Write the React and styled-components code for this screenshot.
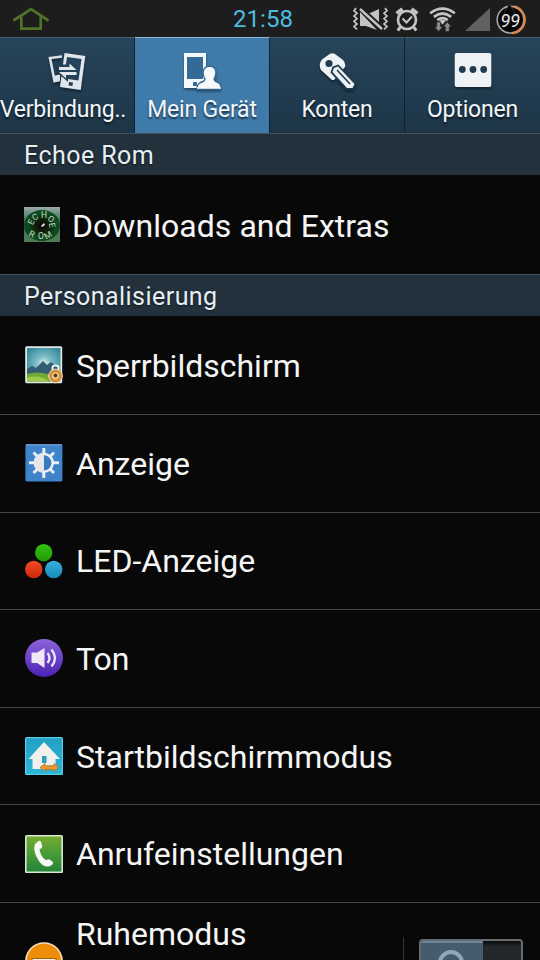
import React from 'react';
import styled, { createGlobalStyle } from 'styled-components';

const StatusHome = () => (
	<svg width='38' height='24' viewBox='0 0 38 24' fill='none' stroke='#4f7227' strokeWidth='2.7'>
		<path d='M1.5 13.5 19 2.2 36.5 13.5' />
		<path d='M9.3 10v11.6h19.4V10' />
	</svg>
);

const MutedVibrate = () => (
	<svg width='36' height='26' viewBox='0 0 36 26'>
		<path d='M14 8.5 26 3v14zM7 6v14h6l11 4z' fill='#c3c3c3' />
		<path d='m7 2 22 20' stroke='#1d1d1d' strokeWidth='5' />
		<path d='m7 3 22 20' stroke='#c3c3c3' strokeWidth='2.4' />
		<path
			d='m3 2-2 2.7 3 2.6-3 2.7 3 2.7-3 2.6 3 2.7-3 2.6 3 2.7M32 2l2 2.7-3 2.6 3 2.7-3 2.7 3 2.6-3 2.7 3 2.6-3 2.7'
			fill='none'
			stroke='#c3c3c3'
			strokeWidth='1.7'
		/>
	</svg>
);

const Alarm = () => (
	<svg width='24' height='26' viewBox='0 0 24 26' fill='none' stroke='#c3c3c3'>
		<circle cx='12' cy='14' r='9' strokeWidth='2.7' />
		<path d='m7.5 12.5 4 4 5.5-6' strokeWidth='2' />
		<path d='M1.7 7.5 7.5 3M22.3 7.5 16.5 3' strokeWidth='4' />
		<path d='m5.5 21-2.8 3.5M18.5 21l2.8 3.5' strokeWidth='3' />
	</svg>
);

const Wifi = () => (
	<svg width='27' height='26' viewBox='0 0 28 26' fill='none' stroke='#c3c3c3' strokeWidth='2.8'>
		<path d='M1.2 7q12.8-9.5 25.6 0M5 10.8q9-7 18 0M8.6 14.2q5.4-4.2 10.8 0' />
		<path d='m10.6 15 3.4 3.7 3.4-3.7q-3.4-2.4-6.8 0z' fill='#c3c3c3' stroke='none' />
		<path d='M8 16h4v5h2.3L10 26l-4.3-5H8zM17 26v-5h-2.3l4.3-5 4.3 5H21v5z' fill='#8b8b8b' stroke='#1d1d1d' strokeWidth='.6' />
	</svg>
);

const Signal = () => (
	<svg width='25' height='24' viewBox='0 0 25 24'>
		<path d='M0 24 25 1v23z' fill='#606060' />
	</svg>
);

const Battery = () => (
	<svg width='32' height='34' viewBox='0 0 32 34'>
		<circle cx='15.5' cy='17.7' r='13.3' fill='#060606' stroke='#a7a7a7' strokeWidth='1.6' />
		<path d='M19 4.5a13.5 13.5 0 0 1-2 26.7' fill='none' stroke='#d7864f' strokeWidth='2.3' />
		<path d='m14.5 2 7.5 13H7z' fill='#050505' stroke='#444' strokeWidth='.7' />
		<text x='15.3' y='24.8' textAnchor='middle' fontFamily='Roboto, sans-serif' fontSize='18' fontStyle='italic' fill='#e9e9e9'>
			99
		</text>
	</svg>
);

const ConnectionsIcon = () => (
	<svg width='38' height='38' viewBox='0 0 38 38'>
		<path d='M14 4.5 2 6l4.5 23 5-1' fill='none' stroke='#d9e1e8' strokeWidth='2.6' />
		<path d='m5 24 7-1.5V29l-6 1.5z' fill='#d9e1e8' />
		<path d='m16.5 1 20.8 3-4.6 34L12 35z' fill='#e0e7ec' />
		<path d='m19 5 14.5 2-3 21.5L16 26.5z' fill='#24425a' />
		<path d='m21 30 4 .6-.5 3.4-4-.6z' fill='#24425a' />
		<path d='M9 12.5h12V9l9 8.5v8H20V30l-9-8z' fill='#24425a' />
		<path d='M11 15h10.5v-3.5l7 6.5H11zM28.5 20v3H18v3.5L11 20z' fill='#e0e7ec' />
	</svg>
);

const DeviceIcon = () => (
	<svg width='38' height='38' viewBox='0 0 38 38'>
		<path d='M1 1h22v35H1z' fill='#f3f8fb' />
		<path d='M4 5h16v22H4zM10 30h4v4h-4z' fill='#356a96' />
		<path
			d='M14 37c0-5 2-6 7-8l1-2c-3-4-3-12 4-13 8 0 8 8 5 13l1 2c5 2 6 3 6 8z'
			fill='#f7fafc'
			stroke='#376b95'
			strokeWidth='1.4'
		/>
		<path d='M14 36h24' stroke='#f7fafc' strokeWidth='1.4' />
	</svg>
);

const KeyIcon = () => (
	<svg width='38' height='38' viewBox='0 0 38 38'>
		<path d='M4 7.5 11 2.5Q14 .3 17 2l8 6q3 3 2 7L16 28h-2L3 18q-3-6 1-10.5z' fill='#edf2f5' />
		<circle cx='11' cy='11.5' r='3.6' fill='#203c51' />
		<path d='m16 16 4-1.5L36.5 32l-2 4H29L14.5 20z' fill='#edf2f5' stroke='#203c51' strokeWidth='3.6' />
		<path d='m16 16 4-1.5L36.5 32l-2 4H29L14.5 20z' fill='#edf2f5' />
		<path d='m19 18 13 14' stroke='#203c51' strokeWidth='1.6' />
	</svg>
);

const OptionsIcon = () => (
	<svg width='38' height='38' viewBox='0 0 38 38'>
		<rect x='.7' y='1' width='36.6' height='34' rx='2' fill='#eef2f4' />
		<g fill='#203c51'>
			<circle cx='8.3' cy='17.5' r='3.4' />
			<circle cx='19' cy='17.5' r='3.4' />
			<circle cx='29.7' cy='17.5' r='3.4' />
		</g>
	</svg>
);

const dialLetters = [
	['E', 7, 15, -65],
	['C', 11, 10, -35],
	['H', 20, 8, 0],
	['O', 27, 12, 35],
	['E', 28, 18, 80],
	['R', 8, 27, 25],
	['O', 17, 29, 0],
	['M', 24, 28, -30],
];

const EchoeIcon = () => (
	<svg width='36' height='35' viewBox='0 0 36 35'>
		<defs>
			<radialGradient id='dial'>
				<stop offset='0' stopColor='#080404' />
				<stop offset='.4' stopColor='#10200d' />
				<stop offset='.8' stopColor='#0b4c20' />
				<stop offset='1' stopColor='#16441f' />
			</radialGradient>
			<linearGradient id='dialBack' x2='0' y2='1'>
				<stop stopColor='#9aaaa8' />
				<stop offset='.4' stopColor='#39705d' />
				<stop offset='1' stopColor='#527b52' />
			</linearGradient>
		</defs>
		<path d='M0 0h36v35H0z' fill='url(#dialBack)' />
		<ellipse cx='18' cy='18.5' rx='18' ry='15.5' fill='url(#dial)' />
		{dialLetters.map(([letter, x, y, turn], i) => (
			<text
				key={i}
				transform={`translate(${x} ${y}) rotate(${turn})`}
				y='3'
				textAnchor='middle'
				fontFamily='Roboto, sans-serif'
				fontSize='8.5'
				fill='#c3dfc0'>
				{letter}
			</text>
		))}
		<path d='m17 19 3-3 1 2-3 2z' fill='#f3e9f5' />
	</svg>
);

const LockscreenIcon = () => (
	<svg width='39' height='39' viewBox='0 0 39 39'>
		<defs>
			<radialGradient id='sky' cx='.5' cy='.48' r='.6'>
				<stop stopColor='#e7f7f4' />
				<stop offset='.4' stopColor='#79bac4' />
				<stop offset='1' stopColor='#37899b' />
			</radialGradient>
		</defs>
		<rect x='.2' y='.2' width='37' height='37' rx='1.5' fill='#e1e9e9' />
		<path d='M2 2h33.5v33.5H2z' fill='url(#sky)' />
		<path d='m2 23 5-3 4 2 7-7 4 4 4-3 9.5 8v9H2z' fill='#315e70' />
		<path d='M2 28q10-3 20 0t13.5-1v8.5H2z' fill='#74a936' />
		<path d='M2 32q12-4 22 3.5H2z' fill='#a1c94d' />
		<path d='M27.5 26v-4.500q0-2 3-2t3 2V26' fill='none' stroke='#f0f0f0' strokeWidth='2' />
		<circle cx='30.500' cy='30' r='6.800' fill='#d38d38' stroke='#f4e0bc' strokeWidth='1' />
		<circle cx='30.500' cy='30' r='3.700' fill='#e5c07d' />
		<circle cx='30.500' cy='29.500' r='1.800' fill='#4c3927' />
	</svg>
);

const DisplayIcon = () => (
	<svg width='38' height='38' viewBox='0 0 38 38'>
		<rect x='.4' y='.4' width='37' height='37' rx='1.5' fill='#3f83ca' />
		<path d='M1 .8h36' stroke='#83b4e5' />
		<g stroke='#e9edf0' strokeWidth='3'>
			<path d='M18.8 4v5M18.8 28v6M4 18.8h6M28 18.8h6M8.5 8.5l4 4M25 25l4 4M29 8.5l-4 4M12.5 25l-4 4' />
		</g>
		<circle cx='18.8' cy='18.8' r='8.9' fill='#397bc0' stroke='#edf0f2' strokeWidth='2.5' />
		<path d='M19 9a9.8 9.8 0 0 0 0 19.6z' fill='#e7e7e7' />
	</svg>
);

const LedIcon = () => (
	<svg width='38' height='38' viewBox='0 0 38 38'>
		<defs>
			<linearGradient id='ledGreen' x2='0' y2='1'>
				<stop stopColor='#35c30e' />
				<stop offset='1' stopColor='#209a07' />
			</linearGradient>
			<linearGradient id='ledRed' x2='0' y2='1'>
				<stop stopColor='#f14b25' />
				<stop offset='1' stopColor='#cf2708' />
			</linearGradient>
			<linearGradient id='ledBlue' x2='0' y2='1'>
				<stop stopColor='#37b2dc' />
				<stop offset='1' stopColor='#168ab8' />
			</linearGradient>
		</defs>
		<circle cx='18.7' cy='10.7' r='8.7' fill='url(#ledGreen)' />
		<circle cx='8.7' cy='27.5' r='8.7' fill='url(#ledRed)' />
		<circle cx='28.7' cy='27.5' r='8.7' fill='url(#ledBlue)' />
	</svg>
);

const SoundIcon = () => (
	<svg width='38' height='38' viewBox='0 0 38 38'>
		<defs>
			<linearGradient id='violet' x2='0' y2='1'>
				<stop stopColor='#8c63da' />
				<stop offset='1' stopColor='#4a23b4' />
			</linearGradient>
		</defs>
		<circle cx='19' cy='19' r='19' fill='url(#violet)' />
		<path d='M6.5 13.5h5.7L19.5 9v20l-7.3-5H6.5z' fill='#eee9f4' />
		<path d='M22.5 14q4 5 0 10M26.5 10.500q7 8.500 0 17' fill='none' stroke='#eee9f4' strokeWidth='2.3' />
	</svg>
);

const HomeModeIcon = () => (
	<svg width='38' height='38' viewBox='0 0 38 38'>
		<defs>
			<linearGradient id='cyan' x2='0' y2='1'>
				<stop stopColor='#23a0c4' />
				<stop offset='1' stopColor='#2cb6d7' />
			</linearGradient>
		</defs>
		<rect width='38' height='38' rx='1.5' fill='#58c9e5' />
		<path d='M1.2 1.2h35.6v35.6H1.2z' fill='url(#cyan)' />
		<path d='M19 5 35 22h-4.5v10h-23V22H3.5z' fill='#f0f0ed' />
		<path d='M17 19h4.5v7H17z' fill='#2b9fbe' />
		<path d='m15 30.5 5-4v2.2h9v-2.2l4.5 4-4.5 4v-2H20v2z' fill='#e19a38' stroke='#b77424' strokeWidth='.8' />
	</svg>
);

const CallIcon = () => (
	<svg width='38' height='38' viewBox='0 0 38 38'>
		<defs>
			<linearGradient id='leaf' x2='0' y2='1'>
				<stop stopColor='#76ab2f' />
				<stop offset='.5' stopColor='#489b38' />
				<stop offset='1' stopColor='#278339' />
			</linearGradient>
		</defs>
		<rect width='38' height='38' rx='1.5' fill='#d7ead1' />
		<path d='M1.6 1.6h34.8v34.8H1.6z' fill='url(#leaf)' />
		<path
			d='M12 7.2q3.5-3 4.2.3l1 4q.2 2-2.7 2.7 1 7 6.4 11 2.3-1.6 4-.5l3 2.3q1 2-2.4 3.7-6 3.2-11.6-4.7Q7.4 16 10 9z'
			fill='#f7f9f4'
		/>
	</svg>
);

const BlockIcon = () => (
	<svg width='38' height='38' viewBox='0 0 38 38'>
		<circle cx='19' cy='19' r='18' fill='#ee8e08' stroke='#f5dfba' strokeWidth='1.7' />
		<rect x='7' y='16.5' width='24' height='6' fill='#f6f1e7' stroke='#9f640c' />
	</svg>
);

const tabs = [
	{ label: 'Verbindung..', icon: <ConnectionsIcon />, shift: -8 },
	{ label: 'Mein Gerät', icon: <DeviceIcon />, active: true },
	{ label: 'Konten', icon: <KeyIcon /> },
	{ label: 'Optionen', icon: <OptionsIcon /> },
];

const settings = [
	{ label: 'Sperrbildschirm', icon: <LockscreenIcon /> },
	{ label: 'Anzeige', icon: <DisplayIcon /> },
	{ label: 'LED-Anzeige', icon: <LedIcon /> },
	{ label: 'Ton', icon: <SoundIcon /> },
	{ label: 'Startbildschirmmodus', icon: <HomeModeIcon /> },
	{ label: 'Anrufeinstellungen', icon: <CallIcon /> },
];

const App = () => (
	<>
		<GlobalStyle />
		<Screen>
			<StatusBar>
				<HomeSlot>
					<StatusHome />
				</HomeSlot>
				<Clock>21:58</Clock>
				<StatusIcons>
					<MutedVibrate />
					<Alarm />
					<Wifi />
					<Signal />
					<Battery />
				</StatusIcons>
			</StatusBar>
			<TabBar>
				{tabs.map(({ label, icon, active, shift }) => (
					<Tab key={label} $active={active}>
						<TabIcon>{icon}</TabIcon>
						<TabLabel $shift={shift}>{label}</TabLabel>
					</Tab>
				))}
			</TabBar>
			<SectionTitle>Echoe Rom</SectionTitle>
			<Row $height='99px' $gap='12px' $first>
				<EchoeIcon />
				<RowLabel $drop='3px' $spacing='0.05px'>
					Downloads and Extras
				</RowLabel>
			</Row>
			<SectionTitle>Personalisierung</SectionTitle>
			{settings.map(({ label, icon }, i) => (
				<Row key={label} $first={i === 0} $height={i === 0 ? '98px' : '97.6px'}>
					<IconSlot>{icon}</IconSlot>
					<RowLabel>{label}</RowLabel>
				</Row>
			))}
			<ToggleRow>
				<BlockSlot>
					<BlockIcon />
				</BlockSlot>
				<RowLabel>Ruhemodus</RowLabel>
				<ToggleArea>
					<Switch>
						<Thumb>
							<Ring />
						</Thumb>
					</Switch>
				</ToggleArea>
			</ToggleRow>
		</Screen>
	</>
);

const GlobalStyle = createGlobalStyle`
	* {
		box-sizing: border-box;
	}
	body {
		margin: 0;
		background: #080808;
		font-family: Roboto, sans-serif;
	}
	svg {
		display: block;
		flex-shrink: 0;
	}
`;

const Screen = styled.div`
	width: 540px;
	height: 960px;
	overflow: hidden;
	background: #080808;
	display: flex;
	flex-direction: column;
`;

const StatusBar = styled.header`
	height: 37px;
	flex-shrink: 0;
	display: grid;
	grid-template-columns: 221px 60px 1fr;
	align-items: center;
	padding: 0 13px 0 12px;
	background: #1d1d1d;
`;

const HomeSlot = styled.div`
	padding-top: 1px;
`;

const Clock = styled.div`
	font-size: 24px;
	color: #4dbbe0;
	text-align: center;
	white-space: nowrap;
`;

const StatusIcons = styled.div`
	display: grid;
	grid-template-columns: 42px 34px 36px 30px 32px;
	align-items: center;
	justify-content: end;
`;

const TabBar = styled.nav`
	height: 96px;
	flex-shrink: 0;
	display: grid;
	grid-template-columns: repeat(4, 1fr);
`;

const Tab = styled.div`
	display: flex;
	flex-direction: column;
	align-items: center;
	padding-top: 14px;
	border-top: 1px solid ${({ $active }) => ($active ? '#8bb9dc' : '#49606f')};
	border-right: 1px solid #0d2334;
	background: ${({ $active }) =>
		$active ? '#3f7aa9' : 'linear-gradient(#27445a, #1d3547)'};

	&:last-child {
		border-right: 0;
	}
`;

const TabIcon = styled.div`
	filter: drop-shadow(0 2px 1px rgba(0, 0, 0, 0.4));
`;

const TabLabel = styled.span`
	margin-top: 5px;
	margin-left: ${({ $shift = 0 }) => $shift}px;
	font-size: 23px;
	line-height: 30px;
	letter-spacing: -0.2px;
	color: #f1f6fa;
	text-shadow: 0 2px 2px rgba(0, 0, 0, 0.6);
	white-space: nowrap;
`;

const SectionTitle = styled.h2`
	height: 42px;
	flex-shrink: 0;
	margin: 0;
	padding: 2px 24px 0;
	border-top: 1px solid #43535e;
	background: #22313c;
	color: #e7eff4;
	font-size: 25px;
	font-weight: 400;
	line-height: 39px;
	letter-spacing: 0.45px;
	text-shadow: 0 1px 2px rgba(0, 0, 0, 0.5);
`;

const Row = styled.div`
	height: ${({ $height }) => $height};
	flex-shrink: 0;
	display: flex;
	align-items: center;
	gap: ${({ $gap = '13px' }) => $gap};
	padding-left: ${({ $gap }) => ($gap ? '24px' : '25px')};
	border-top: ${({ $first }) => ($first ? 'none' : '1px solid #464646')};
`;

const IconSlot = styled.div`
	width: 38px;
	height: 38px;
`;

const RowLabel = styled.span`
	padding-top: ${({ $drop = '1px' }) => $drop};
	font-size: 32px;
	line-height: 40px;
	letter-spacing: ${({ $spacing = '0' }) => $spacing};
	color: #f5f5f5;
	white-space: nowrap;
`;

const ToggleRow = styled.div`
	height: 98px;
	flex-shrink: 0;
	display: flex;
	align-items: flex-start;
	gap: 13px;
	padding: 10px 17px 0 25px;
	border-top: 1px solid #464646;
`;

const BlockSlot = styled.div`
	padding-top: 29px;
`;

const ToggleArea = styled.div`
	margin: 24px 0 0 auto;
	padding: 2px 0 0 15px;
	border-left: 1px solid #333;
`;

const Switch = styled.div`
	width: 104px;
	height: 42px;
	border: 2px solid #686b6d;
	border-radius: 4px;
	background: linear-gradient(#0b0c0d, #24282b 6px);
	overflow: hidden;
`;

const Thumb = styled.div`
	width: 62px;
	height: 38px;
	display: flex;
	justify-content: center;
	padding: 7px 2px 0 0;
	border-top: 2px solid #6b8498;
	background: #465c6d;
`;

const Ring = styled.div`
	width: 26px;
	height: 26px;
	border: 4px solid #8da9bd;
	border-radius: 50%;
`;

export default App;
